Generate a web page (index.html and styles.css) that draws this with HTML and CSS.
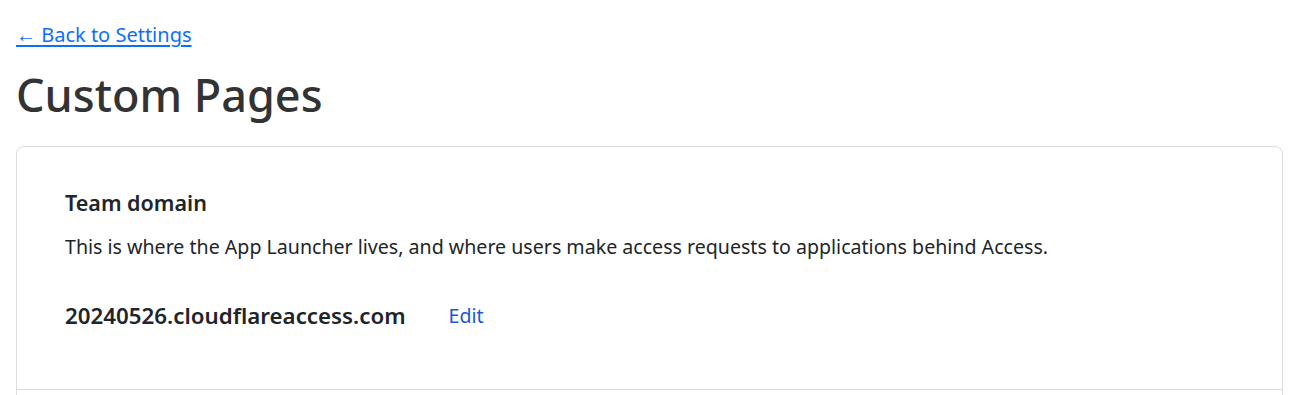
FILE: index.html
```html
<!DOCTYPE html>
<html lang="en">
<head>
    <meta charset="UTF-8">
    <meta name="viewport" content="width=device-width, initial-scale=1.0">
    <title>Custom Pages</title>
    <link rel="stylesheet" href="styles.css">
</head>
<body>

<div class="page">
    <a class="back-link" href="#">&larr; Back to Settings</a>
    <h1 class="page-title">Custom Pages</h1>

    <div class="card">
        <div class="card-section">
            <h3 class="section-title">Team domain</h3>
            <p class="section-text">This is where the App Launcher lives, and where users make access requests to applications behind Access.</p>
            <div class="domain-row">
                <span class="domain">20240526.cloudflareaccess.com</span>
                <a class="edit-link" href="#">Edit</a>
            </div>
        </div>
        <div class="card-section card-section-empty"></div>
    </div>
</div>

</body>
</html>
```

FILE: styles.css
```css
body {
    margin: 0;
    font-family: "Noto Sans", "Open Sans", sans-serif;
    color: #212529;
    background: #ffffff;
}

.page {
    padding: 21px 13px 0 16px;
}

.back-link {
    font-size: 20px;
    color: #0d6efd;
    text-decoration: underline;
    text-underline-offset: 3px;
    display: inline-block;
    line-height: 28px;
}

.page-title {
    font-size: 45px;
    font-weight: 500;
    color: #333333;
    margin: 17px 0 22px 0;
    line-height: 58px;
}

.card {
    border: 1px solid #dddddd;
    border-radius: 8px;
}

.card-section {
    padding: 42px 48px 59px 48px;
    border-bottom: 1px solid #dddddd;
}

.card-section-empty {
    height: 120px;
    border-bottom: none;
}

.section-title {
    font-size: 21.5px;
    font-weight: 600;
    margin: 0 0 16px 0;
    line-height: 28px;
}

.section-text {
    font-size: 19.6px;
    margin: 0 0 41px 0;
    line-height: 28px;
}

.domain-row {
    display: flex;
    align-items: center;
    gap: 43px;
    line-height: 28px;
}

.domain {
    font-size: 22.3px;
    font-weight: 600;
}

.edit-link {
    font-size: 19.6px;
    color: #1a56db;
    text-decoration: none;
}
```
